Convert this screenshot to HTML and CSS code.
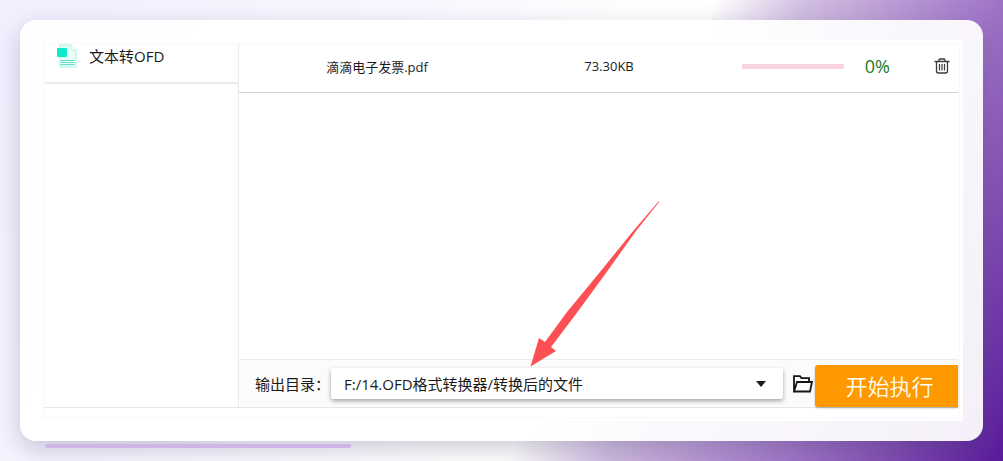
FILE: index.html
```html
<!DOCTYPE html>
<html lang="zh-CN">
<head>
<meta charset="utf-8">
<meta name="viewport" content="width=device-width, initial-scale=1">
<title>文本转OFD</title>
<link rel="stylesheet" href="styles.css">
</head>
<body>
<main class="card">
  <div class="frame">
    <div class="app">
      <aside class="sidebar">
        <h1 class="mode">
          <svg class="mode-icon" viewBox="0 0 22 24" aria-hidden="true">
            <path d="M4 1h11l5 5v17H4z" fill="#e9fdf8" stroke="#a5f3e2" stroke-linejoin="round"/>
            <path d="M15 1v5h5" fill="#fff" stroke="#b9f5e8"/>
            <rect x="1" y="4" width="10" height="9" rx="1" fill="#0cebcb"/>
            <path d="M4.500 16.500h14M4.500 18.500h14M4.500 20.500h14" stroke="#62dfc9"/>
          </svg>
          <span>文本转OFD</span>
        </h1>
      </aside>
      <section class="work">
        <ul class="files">
          <li class="file">
            <span class="cell">滴滴电子发票.pdf</span>
            <span class="cell">73.30KB</span>
            <div class="status">
              <progress class="progress" value="0" max="100" aria-label="转换进度"></progress>
              <span class="percent">0%</span>
              <button class="icon-button trash" type="button" aria-label="删除">
                <svg viewBox="0 0 16 16" width="16" height="16" fill="none" stroke="#3c3c3c" aria-hidden="true">
                  <path d="M.5 3.500h15M5 3.500V2q0-1 1-1h4q1 0 1 1v1.500M2.500 3.500V13q0 2 2 2h7q2 0 2-2V3.500" stroke-width="1.300"/>
                  <path d="M5.500 6v6.500M8 6v6.500M10.500 6v6.500" stroke-width="1.200"/>
                </svg>
              </button>
            </div>
          </li>
        </ul>
        <svg class="pointer" viewBox="0 0 130 166" aria-hidden="true">
          <path d="M129.500.5 128.500.5 104 29 70 71 37 111 15 141 9 137 .5 165.500 26 150 21 146 46 113 76 72 106 30z" fill="#fc5054"/>
        </svg>
        <form class="toolbar">
          <label class="label" for="output">输出目录：</label>
          <div class="select-wrap">
            <select class="select" id="output">
              <option>F:/14.OFD格式转换器/转换后的文件</option>
            </select>
            <svg class="caret" viewBox="0 0 12 6" aria-hidden="true"><path d="M1 0h10L6 6z" fill="#1c1c1c"/></svg>
          </div>
          <button class="icon-button folder" type="button" aria-label="打开目录">
            <svg viewBox="0 0 20 18" width="20" height="18" fill="none" stroke="#151515" stroke-width="1.800" aria-hidden="true">
              <path d="M1 16.500V1.200h6l1.500 2H16v4M1 16.500 4 7h15l-2 9.500z"/>
            </svg>
          </button>
          <button class="start" type="button">开始执行</button>
        </form>
      </section>
    </div>
  </div>
</main>
<div class="accent"></div>
</body>
</html>
```
FILE: styles.css
```css
* {
  box-sizing: border-box;
}

body {
  margin: 0;
  min-height: 100vh;
  padding: 20px 20px 13px;
  display: flex;
  flex-direction: column;
  font-family: "Open Sans", "Noto Sans CJK SC", sans-serif;
  font-size: 15px;
  color: #1a1a1a;
  background: linear-gradient(114deg, #f3efff 0%, #f8f6ff 30%, #ffffff 54%, #ffffff 59%, #d0bce0 67%, #a177c8 82%, #8450b4 90%, #5a1a9c 100%);
}

button,
select {
  font: inherit;
  color: inherit;
  border: 0;
}

.card {
  flex: 1;
  display: flex;
  padding: 20px;
  border-radius: 16px;
  background: rgba(255, 255, 255, 0.93);
  box-shadow: 0 8px 24px rgba(50, 50, 93, 0.25);
}

.frame {
  flex: 1;
  display: flex;
  min-width: 0;
  padding: 4px 5px 13px;
  background: #ffffff;
  box-shadow: inset 0 0 0 3px #ffffff, inset 0 0 0 4px #f8f8fc;
}

.app {
  flex: 1;
  display: flex;
  min-width: 0;
  border-bottom: 1px solid #e6e6e6;
}

.sidebar {
  width: 194px;
  border-right: 1px solid #ececec;
}

.mode {
  height: 40px;
  margin: 0;
  padding: 0 11px;
  display: flex;
  gap: 11px;
  font-size: 15px;
  line-height: 24px;
  font-weight: 400;
  border-bottom: 2px solid #e9ecec;
}

.mode-icon {
  width: 22px;
  height: 24px;
}

.work {
  position: relative;
  flex: 1;
  min-width: 0;
  display: flex;
  flex-direction: column;
}

.files {
  flex: 1;
  margin: 0;
  padding: 0;
  list-style: none;
}

.file {
  display: grid;
  grid-template-columns: 276fr 188fr 255px;
  align-items: center;
  height: 49px;
  padding-bottom: 4px;
  border-bottom: 1px solid #d2d2d2;
}

.cell {
  text-align: center;
  font-size: 13px;
}

.status {
  display: flex;
  align-items: center;
  justify-content: flex-end;
  padding-right: 8px;
}

.progress {
  appearance: none;
  width: 102px;
  height: 5px;
  border: 0;
  border-radius: 1px;
  overflow: hidden;
  background: #f8d2de;
}

.progress::-webkit-progress-bar {
  background: #f8d2de;
}

.progress::-webkit-progress-value {
  background: #e91e63;
}

.percent {
  margin: 0 44px 0 21px;
  font-size: 18px;
  line-height: 24px;
  color: #1c7a1c;
}

.icon-button {
  display: flex;
  padding: 0;
  background: none;
}

.pointer {
  position: absolute;
  right: 298px;
  bottom: 40px;
  width: 130px;
  height: 166px;
  pointer-events: none;
}

.toolbar {
  display: flex;
  align-items: center;
  height: 48px;
  padding-left: 16px;
  background: #fbfbfb;
  border-top: 1px solid #ebebeb;
}

.label {
  width: 76px;
  white-space: nowrap;
}

.select-wrap {
  position: relative;
  flex: 1;
  min-width: 0;
}

.select {
  display: block;
  appearance: none;
  width: 100%;
  height: 31px;
  padding: 0 32px 0 13px;
  border-radius: 2px;
  background: #ffffff;
  box-shadow: 0 2px 4px rgba(0, 0, 0, 0.35);
}

.caret {
  position: absolute;
  right: 16px;
  top: 13px;
  width: 12px;
  height: 6px;
  pointer-events: none;
}

.folder {
  margin: 0 2px 0 10px;
}

.start {
  align-self: flex-end;
  width: 143px;
  height: 42px;
  padding: 0 0 0 6px;
  font-size: 22px;
  font-weight: 350;
  line-height: 32px;
  color: #fffdf0;
  background: #ff9900;
  border-radius: 3px 0 0 3px;
  box-shadow: 0 1px 2px rgba(0, 0, 0, 0.3);
}

.accent {
  position: relative;
  width: 306px;
  height: 4px;
  margin: 3px 0 0 25px;
  border-radius: 2px;
  background: #cdb5e8;
}
```
